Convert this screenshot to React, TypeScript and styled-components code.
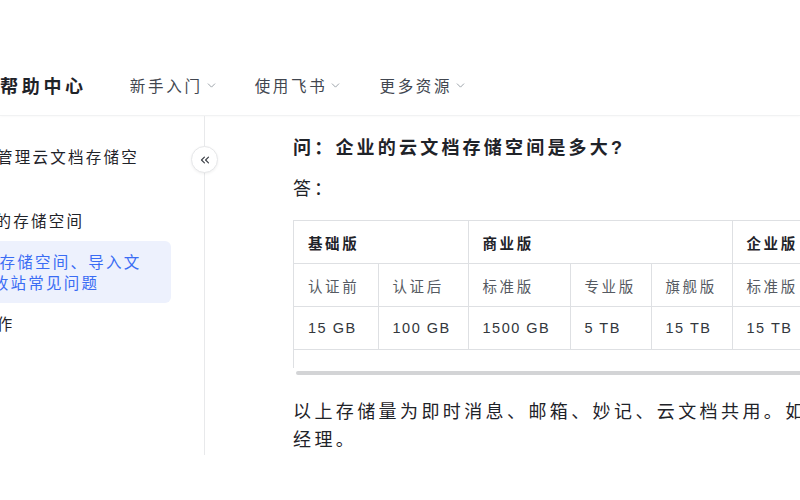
import React from 'react'
import styled,{createGlobalStyle} from 'styled-components'
import {ChevronDown,ChevronsLeft} from 'lucide-react'

const FONT_STACK='"Liberation Sans","Noto Sans CJK SC",sans-serif'
const TEXT_COLOR='#1f2329'
const BORDER_COLOR='#dee0e3'

const NAV_ITEMS=['新手入门','使用飞书','更多资源']

const COLUMN_WIDTHS=[84,90,102,81,81,90,90]

const HEAD_ROW=[
    {label:'基础版',span:2},
    {label:'商业版',span:3},
    {label:'企业版',span:2},
]

const SUB_ROW=['认证前','认证后','标准版','专业版','旗舰版','标准版','高级版']
const SIZE_ROW=['15 GB','100 GB','1500 GB','5 TB','15 TB','15 TB','无限']

const GlobalStyle=createGlobalStyle`
html,body{
margin:0;
padding:0;
background:#fff;
overflow:hidden;
}
body{
font-family:${FONT_STACK};
color:${TEXT_COLOR};
}
`

const Page=styled.div`
width:800px;
height:500px;
padding-top:55px;
box-sizing:border-box;
overflow:hidden;
`

const Header=styled.header`
display:flex;
align-items:center;
height:60px;
border-bottom:1px solid #f1f2f3;
box-shadow:0 1px 2px rgba(0,0,0,0.025);
`

const Brand=styled.div`
font-size:18px;
font-weight:700;
letter-spacing:3.7px;
margin-right:43px;
`

const NavLink=styled.div`
display:flex;
align-items:center;
font-size:15.5px;
letter-spacing:2.7px;
color:#41464f;
margin-right:37px;
svg{
color:#8f959e;
margin-left:2px;
}
`

const Body=styled.div`
position:relative;
display:flex;
height:339px;
`

const Sidebar=styled.aside`
width:205px;
flex:none;
border-right:1px solid #e8e9eb;
box-sizing:border-box;
overflow:hidden;
padding-top:30px;
`

const SideList=styled.div`
margin-left:-40px;
width:211px;
font-size:15.5px;
letter-spacing:2.25px;
`

interface IIndentProps{
    indent:number;
}

const GroupTitle=styled.div<IIndentProps>`
padding-left:${({indent}):number=>indent}px;
line-height:24px;
margin-bottom:30px;
white-space:nowrap;
`

interface ISideItemProps{
    active?:boolean;
}

const SideItem=styled.div<ISideItemProps>`
padding:11px 0 9px;
line-height:21px;
border-radius:6px;
color:${({active}):string=>active?'#3a6cf4':TEXT_COLOR};
background:${({active}):string=>active?'#edf1fd':'transparent'};
`

const SideLine=styled.div<IIndentProps>`
padding-left:${({indent}):number=>indent}px;
white-space:nowrap;
`

const CollapseButton=styled.div`
position:absolute;
left:191px;
top:30px;
width:27px;
height:27px;
border-radius:50%;
background:#fff;
border:1px solid #e6e7e9;
box-shadow:0 1px 3px rgba(0,0,0,0.06);
box-sizing:border-box;
display:flex;
align-items:center;
justify-content:center;
color:#3d4148;
`

const Main=styled.main`
flex:1;
min-width:0;
overflow:hidden;
padding:18px 0 0 88px;
`

const Content=styled.div`
width:720px;
`

const Question=styled.div`
font-size:18px;
font-weight:700;
letter-spacing:3.2px;
line-height:28px;
`

const Answer=styled.div`
font-size:18px;
letter-spacing:3px;
line-height:28px;
margin-top:13px;
`

const TableWrap=styled.div`
margin-top:17px;
border-left:1px solid ${BORDER_COLOR};
padding-bottom:18px;
width:700px;
`

const Table=styled.table`
border-collapse:collapse;
table-layout:fixed;
font-size:14.5px;
letter-spacing:2.6px;
`

interface ICellProps{
    head?:boolean;
    numeric?:boolean;
}

const Cell=styled.td<ICellProps>`
height:43px;
padding:0 0 0 14px;
box-sizing:border-box;
border-top:1px solid ${BORDER_COLOR};
border-right:1px solid ${BORDER_COLOR};
border-bottom:1px solid ${BORDER_COLOR};
white-space:nowrap;
font-weight:${({head}):number=>head?700:400};
color:${({head,numeric}):string=>head?TEXT_COLOR:numeric?'#33373d':'#555a62'};
letter-spacing:${({numeric}):string=>numeric?'1.5px':'inherit'};
`

const ScrollThumb=styled.div`
margin:3px 0 0 3px;
width:720px;
height:4px;
border-radius:2px;
background:#d3d4d6;
`

const Paragraph=styled.p`
margin:23px 0 0;
width:712px;
font-size:18px;
letter-spacing:3.4px;
line-height:28px;
`

export default function App():React.ReactElement{
    return (
        <>
            <GlobalStyle />
            <Page>
                <Header>
                    <Brand>帮助中心</Brand>
                    {NAV_ITEMS.map(item=>(
                        <NavLink key={item}>
                            {item}
                            <ChevronDown size={13} strokeWidth={1.6} />
                        </NavLink>
                    ))}
                </Header>
                <Body>
                    <Sidebar>
                        <SideList>
                            <GroupTitle indent={37}>管理云文档存储空</GroupTitle>
                            <SideItem>
                                <SideLine indent={0}>企业的存储空间</SideLine>
                            </SideItem>
                            <SideItem active>
                                <SideLine indent={4}>管理存储空间、导入文</SideLine>
                                <SideLine indent={15}>回收站常见问题</SideLine>
                            </SideItem>
                            <SideItem>
                                <SideLine indent={19}>操作</SideLine>
                            </SideItem>
                        </SideList>
                    </Sidebar>
                    <CollapseButton>
                        <ChevronsLeft size={14} strokeWidth={2} />
                    </CollapseButton>
                    <Main>
                        <Content>
                            <Question>问：企业的云文档存储空间是多大?</Question>
                            <Answer>答：</Answer>
                            <TableWrap>
                                <Table>
                                    <colgroup>
                                        {COLUMN_WIDTHS.map((width,index)=><col key={index} style={{width}} />)}
                                    </colgroup>
                                    <tbody>
                                        <tr>
                                            {HEAD_ROW.map(cell=><Cell head key={cell.label} colSpan={cell.span}>{cell.label}</Cell>)}
                                        </tr>
                                        <tr>
                                            {SUB_ROW.map((cell,index)=><Cell key={index}>{cell}</Cell>)}
                                        </tr>
                                        <tr>
                                            {SIZE_ROW.map((cell,index)=><Cell numeric key={index}>{cell}</Cell>)}
                                        </tr>
                                    </tbody>
                                </Table>
                            </TableWrap>
                            <ScrollThumb />
                            <Paragraph>以上存储量为即时消息、邮箱、妙记、云文档共用。如需扩容，请联系客户经理。</Paragraph>
                        </Content>
                    </Main>
                </Body>
            </Page>
        </>
    )
}
